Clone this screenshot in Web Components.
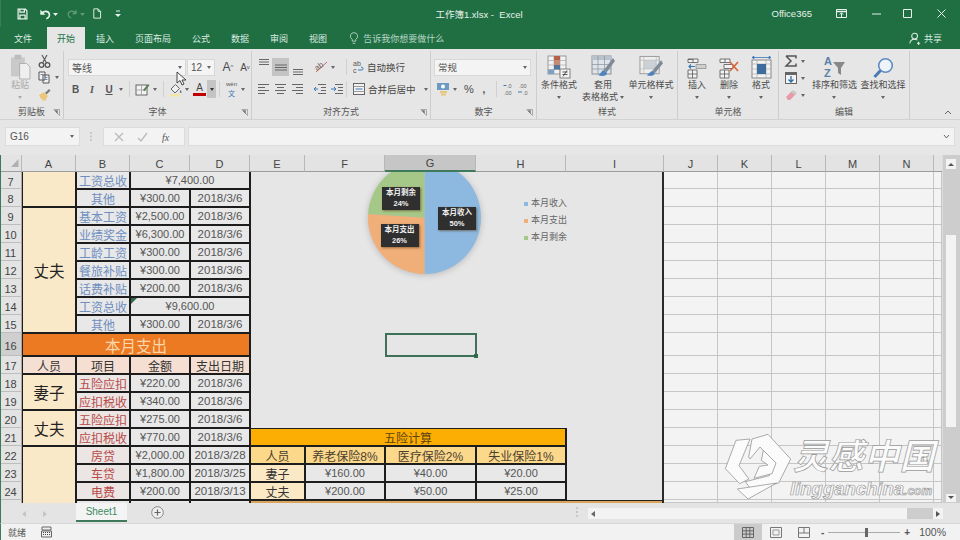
<!DOCTYPE html>
<html lang="zh">
<head>
<meta charset="utf-8">
<title>工作簿1.xlsx - Excel</title>
<style>
  html, body { margin: 0; height: 100%; }
  body {
    width: 960px; height: 540px; overflow: hidden;
    display: flex; flex-direction: column;
    font-family: "Liberation Sans", "Noto Sans CJK SC", sans-serif;
    background: #e6e6e6;
  }
</style>
</head>
<body>
<x-titlebar></x-titlebar>
<x-tabs></x-tabs>
<x-ribbon></x-ribbon>
<x-formula></x-formula>
<x-sheet></x-sheet>
<x-sheetbar></x-sheetbar>
<x-status></x-status>

<script>
  const ICONS = {
    save: '<path d="M1.5 1.5h10l2 2v11h-12z M4 1.5v4h6v-4 M4 14.5v-5h7v5" fill="none" stroke="currentColor" stroke-width="1.7"/>',
    undo: '<path d="M3 6.5c2-3.5 8-3.5 9 .5 .6 2.5-1 4.5-3.5 5.5" fill="none" stroke="currentColor" stroke-width="1.9"/><path d="M1.5 2v6h6z" fill="currentColor"/>',
    redo: '<path d="M12 6.5c-2-3.5-8-3.5-9 .5-.6 2.5 1 4.5 3.5 5.5" fill="none" stroke="currentColor" stroke-width="1.6"/><path d="M13.5 2v6h-6z" fill="currentColor"/>',
    doc: '<path d="M2.5 1h6l3.5 3.5v9.500h-9.500z M8.500 1v3.500h3.500" fill="none" stroke="currentColor" stroke-width="1.3"/>',
    caret: '<path d="M0 0h5L2.500 3z" fill="currentColor"/>',
    qat: '<path d="M1 1h4" stroke="currentColor"/><path d="M0 4h6L3 7z" fill="currentColor"/>',
    bulb: '<path d="M5.500 1a4 4 0 0 1 2 7.500v2h-4v-2a4 4 0 0 1 2-7.500z M4 13h3" fill="none" stroke="currentColor"/>',
    user: '<circle cx="7" cy="5" r="3.600" fill="none" stroke="currentColor" stroke-width="1.300"/><path d="M1 14c.5-3 2.500-5 6-5 1.500 0 2.500.4 3.500 1 M10 14h4 M12 12v4" fill="none" stroke="currentColor" stroke-width="1.300"/>',
    ribbonopt: '<path d="M.5 1.500h10v8h-10z" fill="none" stroke="currentColor"/><path d="M1 3.500h9" stroke="currentColor" stroke-width="1.500"/><path d="M5.500 9V5 M3.800 6.500l1.700-1.700 1.700 1.700" fill="none" stroke="currentColor"/>',
    paste: '<rect x="1" y="4" width="16" height="22" fill="#c9c9c9"/><rect x="5" y="1" width="8" height="5" rx="1" fill="#bdbdbd"/><path d="M11 11h8l4 4v14h-12z" fill="#efefef" stroke="#a8a8a8"/>',
    cut: '<circle cx="3.500" cy="11" r="2.300" fill="none" stroke="#555" stroke-width="1.300"/><circle cx="9.500" cy="11" r="2.300" fill="none" stroke="#555" stroke-width="1.300"/><path d="M4.500 9 9 1 M8.500 9 4 1" stroke="#555" stroke-width="1.100"/>',
    copy: '<path d="M1 1h6v8h-6z M5 4h6v8h-6z" fill="#f3f3f3" stroke="#555"/><path d="M2.500 3.500h3 M6.500 6.500h3 M6.500 8.500h3" stroke="#6d8ab0"/>',
    brush: '<path d="M7 5l4-4 1.500 1.500-4 4z" fill="#777"/><path d="M1 7l5-3 4 4-3 5c-2 0-5-3-6-6z" fill="#eac77c"/>',
    border: '<rect x="1" y="3" width="11" height="10" fill="#f3f3f3" stroke="#666"/><path d="M1 8h11 M6.500 3v10" stroke="#aaa"/><path d="M8 8l5-6 1.500 1.200-5 6z" fill="#5d7d5b"/>',
    fill: '<path d="M3 7l4.500-4.500 4 4-4.500 4.500z" fill="#f0f0f0" stroke="#666"/><path d="M12.500 8c1 1.500 1.500 2.500.5 3s-1.500-1.500-.5-3z" fill="#666"/><rect x="1" y="12" width="11" height="2.500" fill="#f2e6a6"/>',
    wen: '<text x="7.500" y="5" font-size="6" text-anchor="middle" fill="#555" font-family="Liberation Sans">wén</text><text x="7.500" y="15" font-size="7" text-anchor="middle" fill="#3a76b5" font-family="Noto Sans CJK SC">文</text>',
    atop: '<path d="M1 1.500h10 M1 4h10 M1 6.500h10" stroke="#666"/>',
    amid: '<path d="M2 5h12 M2 7.500h12 M2 10h12" stroke="#666"/>',
    abot: '<path d="M1 5.500h10 M1 8h10 M1 10.500h10" stroke="#666"/>',
    left: '<path d="M1 1.500h11 M1 4.500h7 M1 7.500h11 M1 10.500h7" stroke="#666"/>',
    center: '<path d="M1 1.500h11 M3 4.500h7 M1 7.500h11 M3 10.500h7" stroke="#666"/>',
    right: '<path d="M1 1.500h11 M5 4.500h7 M1 7.500h11 M5 10.500h7" stroke="#666"/>',
    indl: '<path d="M5 1.500h8 M8 4.500h5 M8 7.500h5 M5 10.500h8" stroke="#666"/><path d="M5 6H1 M3 4 1 6l2 2" fill="none" stroke="#3b78b5"/>',
    indr: '<path d="M5 1.500h8 M8 4.500h5 M8 7.500h5 M5 10.500h8" stroke="#666"/><path d="M1 6h5 M4 4l2 2-2 2" fill="none" stroke="#3b78b5"/>',
    orient: '<text x="1" y="9" font-size="8" fill="#666" font-family="Liberation Sans" transform="rotate(-35 5 7)">ab</text><path d="M2 12 13 2" stroke="#c04a3a" stroke-width=".8"/>',
    wrap: '<text x="0" y="6" font-size="7" fill="#555" font-family="Liberation Sans">ab</text><text x="0" y="13" font-size="7" fill="#555" font-family="Liberation Sans">c</text><path d="M5 10h4c1.500 0 1.500-3-1-3" fill="none" stroke="#3b78b5"/>',
    merge: '<rect x=".5" y=".5" width="11" height="11" fill="#f3f3f3" stroke="#666"/><path d="M.5 3.500h11 M.5 8.500h11" stroke="#999"/><path d="M2.500 6h7" stroke="#3b78b5"/>',
    currency: '<rect x="1" y="1" width="12" height="7" fill="#6d9ac4"/><circle cx="7" cy="4.500" r="2" fill="#fff"/><path d="M4 9h7v2h-7z M5 11.500h5v2h-5z" fill="#e6c77a"/>',
    inc: '<text x="4" y="6" font-size="5.500" fill="#666" font-family="Liberation Sans">.0</text><text x="1" y="12.500" font-size="5.500" fill="#666" font-family="Liberation Sans">.00</text><path d="M.5 3.500h3" stroke="#3b78b5"/>',
    dec: '<text x="2" y="6" font-size="5.500" fill="#666" font-family="Liberation Sans">.00</text><text x="6" y="12.500" font-size="5.500" fill="#666" font-family="Liberation Sans">.0</text><path d="M1 10h4" stroke="#3b78b5"/>',
    cond: '<rect x="1" y="1" width="18" height="18" fill="#f2f2f2" stroke="#999"/><path d="M1 5.500h18 M1 10h18 M1 14.500h18 M7 1v18 M13 1v18" stroke="#aaa" stroke-width=".7"/><rect x="7" y="1" width="6" height="4.500" fill="#b6604a"/><rect x="7" y="5.500" width="6" height="4.500" fill="#c78a74"/><rect x="7" y="10" width="6" height="4.500" fill="#52759c"/><rect x="1" y="14.500" width="6" height="4.500" fill="#7fa0c4"/><rect x="13" y="14" width="10" height="9" fill="#f4f4f4" stroke="#666" stroke-width=".8"/><path d="M15.500 17h5 M15.500 19.500h5 M20 15.500l-4 6" stroke="#333" stroke-width=".8"/>',
    table: '<rect x="1" y="1" width="19" height="18" fill="#dfe4ea" stroke="#8a9099"/><rect x="1" y="1" width="19" height="4" fill="#b9c2cc"/><path d="M1 9.500h19 M1 14h19 M7 1v18 M13.500 1v18" stroke="#8a9099" stroke-width=".7"/><path d="M22 3 13 15l2.500 2.500L24 6z" fill="#7f8a96"/><path d="M13 15c-3 1-3 4-6 5 4 2 9 1 9-2z" fill="#4f83bd"/>',
    cellstyle: '<rect x="1" y="1" width="20" height="18" fill="#eee" stroke="#9a9a9a"/><rect x="5" y="5" width="13" height="9" fill="#cbd1d6"/><path d="M1 5h20 M1 14h20 M5 1v18 M18 1v18" stroke="#b3b3b3" stroke-width=".6"/><path d="M23 5 14 16l2.500 2.500L25 8z" fill="#7f8a96"/><path d="M14 16c-3 1-3 3-6 4.500 4 1.500 8 .500 8.500-2z" fill="#4f83bd"/>',
    ins: '<path d="M1 1h10v3.500H1z M1 1.500h5M6 1v3.500 M1 12h9v8H1z M1 16h9 M5.500 12v8" fill="#f3f3f3" stroke="#666" stroke-width=".9"/><path d="M9 6.500h10v4H9z" fill="#cfcfcf" stroke="#888" stroke-width=".7"/><path d="M8 8.500H2 M4 6.500l-2 2 2 2" fill="none" stroke="#3b78b5" stroke-width="1.200"/>',
    del: '<path d="M1 1h10v3.500H1z M6 1v3.500 M1 12h9v8H1z M1 16h9 M5.500 12v8 M5 6.500h9v4H5z" fill="#f3f3f3" stroke="#666" stroke-width=".9"/><path d="M11 4l8 9 M19 4l-8 9" stroke="#d9663f" stroke-width="1.700"/>',
    fmt: '<rect x="1" y="4" width="19" height="18" fill="#f3f3f3" stroke="#888"/><path d="M1 8h19 M1 13h19 M1 18h19 M6 4v18 M15 4v18" stroke="#aaa" stroke-width=".7"/><rect x="6" y="8" width="9" height="10" fill="#3d6d9e"/><path d="M1 1.500h19 M1 1.500l2-1.200v2.400z M20 1.500l-2-1.200v2.400z" stroke="#3b78b5" stroke-width=".8" fill="#3b78b5"/>',
    sigma: '<path d="M1 1h10v2.500 M1 1l5 5-5 5h10v-2.500" fill="none" stroke="#555" stroke-width="1.500"/>',
    down: '<rect x=".5" y=".5" width="11" height="11" fill="#f3f3f3" stroke="#666"/><rect x=".5" y=".5" width="11" height="2.500" fill="#666"/><path d="M6 4v6 M3.500 7.500 6 10l2.500-2.500" fill="none" stroke="#2e6ca8" stroke-width="1.300"/>',
    erase: '<path d="M1 8l6-6 4 3-6 6H3z" fill="#e79aa8"/><path d="M6 3l2-2 4 3-2 2z" fill="#c9c9c9"/>',
    sort: '<text x="0" y="10" font-size="11" font-weight="bold" fill="#5d7fa8" font-family="Liberation Sans">A</text><text x="0" y="22" font-size="11" font-weight="bold" fill="#5d7fa8" font-family="Liberation Sans">Z</text><path d="M9 7h12l-4 6v7l-3-2v-5z" fill="#888"/>',
    find: '<circle cx="13.500" cy="8.500" r="6.800" fill="#eef4fa" stroke="#5d8cc0" stroke-width="1.600"/><path d="M8.500 13.500 2.500 20" stroke="#4b7bb0" stroke-width="3"/>',
    launcher: '<path d="M.5 .5h6v6" fill="none" stroke="#999" stroke-width=".8"/><path d="M1.500 1.500h3v3z M6.500 6.500L3 3" fill="#777" stroke="#777" stroke-width=".5"/>',
    fx: '<text x="1" y="10" font-size="10" font-style="italic" font-family="Liberation Serif" fill="#555">fx</text>',
    cross: '<path d="M1 1l8 8 M9 1 1 9" stroke="#bbb" stroke-width="1.300"/>',
    check: '<path d="M1 6l3 3 6-8" fill="none" stroke="#bbb" stroke-width="1.300"/>',
    grid: '<path d="M.5 .5h11v10H.5z M.5 3.800h11 M.5 7.100h11 M4.200 .5v10 M7.800 .5v10" fill="none" stroke="#666"/>',
    page: '<path d="M.5 .5h11v10H.5z" fill="none" stroke="#777"/><path d="M3 3h6v5H3z" fill="none" stroke="#999"/>',
    brk: '<path d="M.5 .5h11v10H.5z M.5 6h11 M6 .5V6" fill="none" stroke="#777"/>',
    macro: '<path d="M1 1h9v3H1z M.5 5h10v6H.5z" fill="none" stroke="#666"/><path d="M2 6.500h1 M4 6.500h1 M6 6.500h1 M8 6.500h1 M2 8.500h1 M4 8.500h1 M6 8.500h1 M8 8.500h1" stroke="#444"/>'
  };

  class XIco extends HTMLElement {
    connectedCallback() {
      const w = this.getAttribute('w') || 14;
      const h = this.getAttribute('h') || w;
      const vb = this.getAttribute('vb') || `0 0 ${w} ${h}`;
      this.attachShadow({ mode: 'open' }).innerHTML = `
        <style>:host { display: inline-flex; flex: none; } svg { display: block; overflow: visible; }</style>
        <svg width="${w}" height="${h}" viewBox="${vb}">${ICONS[this.getAttribute('n')] || ''}</svg>`;
    }
  }
  customElements.define('x-ico', XIco);

  class XTitlebar extends HTMLElement {
    constructor() {
      super();
      this.attachShadow({ mode: 'open' }).innerHTML = `
        <style>
          :host { display: grid; grid-template-columns: 1fr auto 1fr; align-items: center; height: 27px; background: #1f6f43; color: #e8f1eb; font-size: 9.500px; flex: none; border-left: 1px solid #3b7a5b; box-sizing: border-box; }
          .l { display: flex; align-items: center; padding-left: 16px; }
          .r { display: flex; align-items: center; justify-content: flex-end; }
          .t { margin-right: 3px; }
          .o { margin-right: 24px; }
          .dim { color: #5f9a7b; }
        </style>
        <div class="l">
          <x-ico n="save" w="11" h="12" vb="0 0 15 16" style="margin-right:11px"></x-ico>
          <x-ico n="undo" w="12" vb="0 0 14 14"></x-ico>
          <x-ico n="caret" w="5" h="3" style="margin:2px 0 0 2px"></x-ico>
          <x-ico n="redo" w="11" vb="0 0 14 14" class="dim" style="margin-left:8px"></x-ico>
          <x-ico n="caret" w="5" h="3" class="dim" style="margin:2px 0 0 3px"></x-ico>
          <x-ico n="doc" w="10" h="11" vb="0 0 14 15" style="margin-left:7px"></x-ico>
          <x-ico n="qat" w="6" h="7" style="margin-left:13px"></x-ico>
        </div>
        <div class="t">工作簿1.xlsx&nbsp;- &nbsp;Excel</div>
        <div class="r">
          <span class="o">Office365</span>
          <x-ico n="ribbonopt" w="11" h="11"></x-ico>
          <svg width="9" height="2" style="margin-left:25px"><path d="M0 1h9" stroke="#e8f1eb"/></svg>
          <svg width="9" height="9" style="margin-left:22px"><path d="M.5 .5h8v8h-8z" fill="none" stroke="#e8f1eb"/></svg>
          <svg width="9" height="9" style="margin:0 14px 0 25px"><path d="M.5 .5l8 8 M8.500 .5l-8 8" stroke="#e8f1eb"/></svg>
        </div>`;
    }
  }
  customElements.define('x-titlebar', XTitlebar);

  class XTabs extends HTMLElement {
    constructor() {
      super();
      const tabs = ['插入', '页面布局', '公式', '数据', '审阅', '视图'];
      this.attachShadow({ mode: 'open' }).innerHTML = `
        <style>
          :host { display: flex; align-items: stretch; gap: 1px; height: 22px; background: #1f6f43; color: #dcebe2; font-size: 9px; padding-left: 4px; box-sizing: border-box; flex: none; }
          span { display: flex; align-items: center; padding: 0 10px; white-space: nowrap; }
          .on { background: #e6e6e6; color: #217346; margin: 0 0 0 4px; }
          .tell { padding: 0; margin-left: 12px; gap: 5px; color: #b9d6c6; }
          .share { margin-left: auto; padding: 0 18px 0 0; gap: 3px; }
        </style>
        <span>文件</span><span class="on">开始</span>
        ${tabs.map(t => `<span>${t}</span>`).join('')}
        <span class="tell"><x-ico n="bulb" w="8" h="14" vb="1 0 9 14"></x-ico>告诉我你想要做什么</span>
        <span class="share"><x-ico n="user" w="12" h="13" vb="0 0 15 16"></x-ico>共享</span>`;
    }
  }
  customElements.define('x-tabs', XTabs);

  class XGroup extends HTMLElement {
    constructor() {
      super();
      const launcher = this.hasAttribute('launcher') ? '<x-ico class="lnc" n="launcher" w="7"></x-ico>' : '';
      this.attachShadow({ mode: 'open' }).innerHTML = `
        <style>
          :host { display: flex; flex-direction: column; flex: none; box-sizing: border-box; border-right: 1px solid #cdcdcd; height: 68px; margin-top: 2px; width: ${this.getAttribute('w')}px; position: relative; }
          .c { flex: 1; display: flex; min-height: 0; }
          .lb { height: 14px; line-height: 14px; text-align: center; font-size: 9px; color: #555; flex: none; }
          .lnc { position: absolute; right: 3px; bottom: 3px; }
        </style>
        <div class="c"><slot></slot></div>
        <div class="lb">${this.getAttribute('label')}</div>${launcher}`;
    }
  }
  customElements.define('x-group', XGroup);

  class XBig extends HTMLElement {
    constructor() {
      super();
      this.attachShadow({ mode: 'open' }).innerHTML = `
        <style>
          :host { display: flex; flex-direction: column; align-items: center; flex: none; font-size: 9px; line-height: 12px; color: #4a4a4a; white-space: nowrap; text-align: center; }
          .i { height: 28px; flex: none; display: flex; align-items: flex-end; }
        </style>
        <div class="i"><slot name="i"></slot></div>
        <div><slot></slot></div>`;
    }
  }
  customElements.define('x-big', XBig);

  class XRibbon extends HTMLElement {
    constructor() {
      super();
      this.attachShadow({ mode: 'open' }).innerHTML = `
        <style>
          :host { display: flex; height: 71px; background: #e6e6e6; border-bottom: 1px solid #d2d2d2; box-sizing: border-box; position: relative; flex: none; color: #4a4a4a; font-size: 9px; }
          .c { display: inline-block; width: 0; height: 0; border: 2px solid transparent; border-top: 3px solid #666; border-bottom: 0; flex: none; vertical-align: middle; }
          .col { display: flex; flex-direction: column; }
          .rows { display: flex; flex-direction: column; padding-top: 7px; gap: 4px; }
          .row { display: flex; align-items: center; height: 18px; }
          .b { display: flex; align-items: center; justify-content: center; height: 18px; flex: none; }
          .sep { width: 1px; height: 16px; background: #d0d0d0; flex: none; }
          .box { background: #f4f4f4; border: 1px solid #d8d8d8; box-sizing: border-box; height: 17px; display: flex; align-items: center; justify-content: space-between; padding: 0 3px; color: #555; font-size: 10px; flex: none; }
          .sl { font-size: 9.500px; gap: 3px; display: flex; align-items: center; white-space: nowrap; color: #444; }
          .hl { background: #c4c4c4; }
          .cur { position: absolute; left: 176px; top: 22px; }
          .txt { font-family: "Liberation Sans", sans-serif; font-weight: bold; color: #555; font-size: 10px; }
          .up { position: absolute; right: 8px; bottom: 4px; }
        </style>
        <x-group w="64" label="剪贴板" launcher>
          <x-big style="width:36px;margin-left:2px;color:#aaa"><x-ico slot="i" n="paste" w="21" h="25" vb="0 0 24 29"></x-ico>粘贴<br><i class="c" style="border-top-color:#aaa"></i></x-big>
          <div class="col" style="padding-top:1px">
            <div class="b" style="justify-content:flex-start;height:17px"><x-ico n="cut" w="13" h="13"></x-ico></div>
            <div class="b" style="justify-content:flex-start;gap:5px;height:17px"><x-ico n="copy" w="12" h="13"></x-ico><i class="c"></i></div>
            <div class="b" style="justify-content:flex-start;height:17px"><x-ico n="brush" w="13"></x-ico></div>
          </div>
        </x-group>
        <x-group w="188" label="字体" launcher>
          <div class="rows" style="padding-left:4px">
            <div class="row" style="gap:1px">
              <div class="box" style="width:118px"><span>等线</span><i class="c"></i></div>
              <div class="box" style="width:28px"><span>12</span><i class="c"></i></div>
              <span class="b" style="width:18px;margin-left:3px;font-size:12px;font-family:'Liberation Sans'">A<sup style="font-size:6px">^</sup></span>
              <span class="b" style="width:14px;font-size:10px;font-family:'Liberation Sans'">A<sup style="font-size:6px">v</sup></span>
            </div>
            <div class="row">
              <span class="b txt" style="width:15px">B</span>
              <span class="b txt" style="width:18px;font-style:italic;font-family:'Liberation Serif'">I</span>
              <span class="b txt" style="width:16px;text-decoration:underline">U</span>
              <span class="b" style="width:7px"><i class="c"></i></span>
              <span style="width:5px"></span><i class="sep"></i><span style="width:5px"></span>
              <x-ico n="border" w="15"></x-ico><span class="b" style="width:9px"><i class="c"></i></span>
              <span style="width:4px"></span><i class="sep"></i><span style="width:4px"></span>
              <x-ico n="fill" w="15"></x-ico><span class="b" style="width:7px"><i class="c"></i></span>
              <span class="b" style="width:15px;flex-direction:column;color:#444;font:10px 'Liberation Sans';margin-left:2px;line-height:11px"><span>A</span><span style="width:13px;height:3px;background:#c00000"></span></span>
              <span class="b hl" style="width:9px"><i class="c" style="border-top-color:#333"></i></span>
              <span style="width:3px"></span><i class="sep"></i><span style="width:4px"></span>
              <x-ico n="wen" w="15" h="16"></x-ico><span class="b" style="width:7px"><i class="c"></i></span>
            </div>
          </div>
        </x-group>
        <x-group w="179" label="对齐方式" launcher>
          <div class="rows" style="padding-left:3px">
            <div class="row">
              <span class="b" style="width:17px"><x-ico n="atop" w="12" h="12" style="margin-top:-6px"></x-ico></span>
              <span class="b hl" style="width:17px"><x-ico n="amid" w="16" h="15"></x-ico></span>
              <span class="b" style="width:17px"><x-ico n="abot" w="12" h="12" style="margin-top:6px"></x-ico></span>
              <span style="width:8px"></span>
              <x-ico n="orient" w="15"></x-ico><span class="b" style="width:8px"><i class="c"></i></span>
              <span style="width:9px"></span><i class="sep"></i><span style="width:6px"></span>
              <span class="sl"><x-ico n="wrap" w="11" h="14"></x-ico>自动换行</span>
            </div>
            <div class="row">
              <span class="b" style="width:17px"><x-ico n="left" w="13" h="12"></x-ico></span>
              <span class="b" style="width:17px"><x-ico n="center" w="13" h="12"></x-ico></span>
              <span class="b" style="width:17px"><x-ico n="right" w="13" h="12"></x-ico></span>
              <span style="width:7px"></span>
              <x-ico n="indl" w="14" h="12"></x-ico><span style="width:3px"></span><x-ico n="indr" w="14" h="12"></x-ico>
              <span style="width:2px"></span><i class="sep"></i><span style="width:6px"></span>
              <span class="sl"><x-ico n="merge" w="12"></x-ico>合并后居中<i class="c" style="margin-left:5px"></i></span>
            </div>
          </div>
        </x-group>
        <x-group w="106" label="数字" launcher>
          <div class="rows" style="padding-left:3px">
            <div class="row"><div class="box" style="width:97px"><span style="font-size:9.500px">常规</span><i class="c"></i></div></div>
            <div class="row">
              <span style="width:2px"></span>
              <x-ico n="currency" w="14"></x-ico><span class="b" style="width:9px"><i class="c"></i></span>
              <span class="b" style="width:20px;font:11px 'Liberation Sans'">%</span>
              <span class="b" style="width:10px;font:bold 10px 'Liberation Sans'">,</span>
              <span style="width:7px"></span><i class="sep"></i><span style="width:6px"></span>
              <x-ico n="inc" w="14"></x-ico>
              <x-ico n="dec" w="14"></x-ico>
            </div>
          </div>
        </x-group>
        <x-group w="141" label="样式">
          <x-big style="width:40px;margin-left:2px"><x-ico slot="i" n="cond" w="24"></x-ico>条件格式<br><i class="c"></i></x-big>
          <x-big style="width:46px;margin-left:1px"><x-ico slot="i" n="table" w="24"></x-ico>套用<br>表格格式<i class="c" style="margin-left:2px"></i></x-big>
          <x-big style="width:46px;margin-left:2px"><x-ico slot="i" n="cellstyle" w="24" vb="0 0 25 24"></x-ico>单元格样式<br><i class="c"></i></x-big>
        </x-group>
        <x-group w="101" label="单元格">
          <x-big style="width:32px;margin-left:3px"><x-ico slot="i" n="ins" w="21"></x-ico>插入<br><i class="c"></i></x-big>
          <x-big style="width:32px"><x-ico slot="i" n="del" w="21"></x-ico>删除<br><i class="c"></i></x-big>
          <x-big style="width:32px"><x-ico slot="i" n="fmt" w="21" h="23"></x-ico>格式<br><i class="c"></i></x-big>
        </x-group>
        <x-group w="131" label="编辑">
          <div class="col" style="width:31px;padding:4px 0 0 6px;gap:5px;box-sizing:border-box">
            <span class="b" style="justify-content:flex-start;gap:4px;height:12px"><x-ico n="sigma" w="12"></x-ico><i class="c"></i></span>
            <span class="b" style="justify-content:flex-start;gap:4px;height:12px"><x-ico n="down" w="12"></x-ico><i class="c"></i></span>
            <span class="b" style="justify-content:flex-start;gap:4px;height:12px"><x-ico n="erase" w="12"></x-ico><i class="c"></i></span>
          </div>
          <x-big style="width:49px"><x-ico slot="i" n="sort" w="22" h="24"></x-ico>排序和筛选<br><i class="c"></i></x-big>
          <x-big style="width:48px"><x-ico slot="i" n="find" w="22"></x-ico>查找和选择<br><i class="c"></i></x-big>
        </x-group>
        <svg class="up" width="8" height="5"><path d="M1 4l3-3 3 3" fill="none" stroke="#666"/></svg>
        <svg class="cur" width="12" height="15" viewBox="0 0 12 15"><path d="M1 1v11l3-2.500 2 4.500 2-1-2-4h4z" fill="#f6f6f6" stroke="#333" stroke-width=".9"/></svg>`;
    }
  }
  customElements.define('x-ribbon', XRibbon);

  class XFormula extends HTMLElement {
    constructor() {
      super();
      this.attachShadow({ mode: 'open' }).innerHTML = `
        <style>
          :host { display: flex; align-items: center; height: 35px; background: #e6e6e6; padding: 0 5px; box-sizing: border-box; flex: none; position: relative; }
          .box { height: 19px; background: #f3f3f3; border: 1px solid #dcdcdc; box-sizing: border-box; display: flex; align-items: center; flex: none; margin-top: -2px; }
          .name { width: 75px; justify-content: space-between; padding: 0 5px 0 4px; font-size: 10px; color: #555; }
          .fn { width: 82px; margin-left: 23px; gap: 13px; padding-left: 10px; }
          .in { flex: 1; margin-left: 3px; justify-content: flex-end; padding-right: 4px; }
          .dots { position: absolute; left: 90px; top: 12px; }
          .c { width: 0; height: 0; border: 2px solid transparent; border-top: 3px solid #666; border-bottom: 0; }
        </style>
        <div class="box name"><span>G16</span><i class="c"></i></div>
        <div class="box fn"><x-ico n="cross" w="10"></x-ico><x-ico n="check" w="11" h="10"></x-ico><x-ico n="fx" w="11" h="12"></x-ico></div>
        <div class="box in"><svg width="7" height="5"><path d="M1 1l2.500 3L6 1" fill="none" stroke="#666"/></svg></div>
        <svg class="dots" width="2" height="9"><path d="M1 0v2 M1 3.500v2 M1 7v2" stroke="#aaa"/></svg>`;
    }
  }
  customElements.define('x-formula', XFormula);

  class XChart extends HTMLElement {
    constructor() {
      super();
      const tag = (x, y, a, b) => `<div class="tag" style="left:${x}px;top:${y}px">${a}<br>${b}</div>`;
      const leg = (c, t) => `<div class="lg"><i style="background:${c}"></i>${t}</div>`;
      this.attachShadow({ mode: 'open' }).innerHTML = `
        <style>
          :host { display: block; position: absolute; left: 249px; top: 17px; width: 414px; height: 328px; overflow: hidden; }
          svg { position: absolute; left: 0; top: 0; filter: drop-shadow(0 1px 3px rgba(0,0,0,.2)); }
          .tag { position: absolute; width: 38px; height: 23px; background: #2f2f2f; color: #f0f0f0; font-size: 7.500px; line-height: 10.500px; text-align: center; padding-top: 1px; box-sizing: border-box; font-weight: bold; box-shadow: 1px 1px 2px rgba(90,60,20,.6); white-space: nowrap; }
          .legend { position: absolute; left: 274px; top: 25px; display: flex; flex-direction: column; gap: 4px; font-size: 9px; line-height: 13px; color: #666; }
          .lg { display: flex; align-items: center; gap: 3px; }
          .lg i { width: 4px; height: 4px; }
        </style>
        <svg width="414" height="120">
          <path d="M174.500 45.500V-11A56.500 56.500 0 0 1 174.500 102z" fill="#8db8e0"/>
          <path d="M174.500 45.500V102A56.500 56.500 0 0 1 118.100 41.950z" fill="#f0ae78"/>
          <path d="M174.500 45.500L118.100 41.950A56.500 56.500 0 0 1 174.500 -11z" fill="#a5c788"/>
        </svg>
        ${tag(188, 35, '本月收入', '50%')}${tag(130.500, 52, '本月支出', '26%')}${tag(132, 15, '本月剩余', '24%')}
        <div class="legend">${leg('#8db8e0', '本月收入')}${leg('#f0ae78', '本月支出')}${leg('#a5c788', '本月剩余')}</div>`;
    }
  }
  customElements.define('x-chart', XChart);

  class XWatermark extends HTMLElement {
    constructor() {
      super();
      this.attachShadow({ mode: 'open' }).innerHTML = `
        <style>
          :host { display: block; position: absolute; left: 722px; top: 278px; width: 220px; height: 70px; pointer-events: none; }
          svg { position: absolute; left: 0; top: 0; }
          div { position: absolute; white-space: nowrap; color: #fbfbfb; -webkit-text-stroke: .7px #9a9a9a; font-style: italic; font-weight: bold; }
          .cn { left: 70px; top: 3px; font-size: 35px; line-height: 42px; letter-spacing: .5px; }
          .en { left: 67px; top: 45px; font-size: 18.500px; line-height: 22px; }
          .en span { font-size: 12px; }
        </style>
        <svg width="70" height="70" viewBox="185 40 210 210">
          <g fill="#fbfbfb" stroke="#9a9a9a" stroke-width="2.500" stroke-linejoin="round">
            <path d="M224 62l42-4-33 80 30 40-28 14-43-45z"/>
            <path d="M272 58l48-14 68 74-36 72-82 20-18-24 72-18 14-42-42-44-30 36-4-6z"/>
            <path d="M306 92l38 38-12 32-54 14 16-36 26-4-20-14z"/>
            <path d="M228 208l118-18-86 48z"/>
          </g>
        </svg>
        <div class="cn">灵感中国</div>
        <div class="en">lingganchina<span>.com</span></div>`;
    }
  }
  customElements.define('x-watermark', XWatermark);

  class XSheet extends HTMLElement {
    constructor() {
      super();
      const cols = [22, 54, 54, 60, 60, 55, 80, 91, 90, 98, 54, 54, 54, 54, 54, 8];
      const rowsH = [17, 17, ...Array(8).fill(18), 23, ...Array(8).fill(18), 3];
      const letters = ['A', 'B', 'C', 'D', 'E', 'F', 'G', 'H', 'I', 'J', 'K', 'L', 'M', 'N'];
      let html = '';
      // n is the sheet row number, c the grid column (A = 2)
      const cell = (c, n, cs, rs, cls, text = '') => {
        const top = n === 7 ? ' nt' : '';
        const end = n + rs - 1 === 25 ? ' nb' : '';
        html += `<div class="${cls}${top}${end}" style="grid-column:${c}/span ${cs};grid-row:${n - 5}/span ${rs}">${text}</div>`;
      };

      html += `<div class="hd corner" style="grid-column:1;grid-row:1"><svg width="8" height="8"><path d="M7.500 0v8H0z" fill="#b0b0b0"/></svg></div>`;
      letters.forEach((l, i) => {
        html += `<div class="hd${l === 'G' ? ' sel' : ''}" style="grid-column:${i + 2};grid-row:1">${l}</div>`;
      });
      html += `<div class="hd" style="grid-column:16;grid-row:1;border-right:0"></div>`;
      for (let n = 7; n <= 25; n++) {
        cell(1, n, 1, 1, 'rh' + (n === 16 ? ' rsel' : ''), n === 25 ? '' : n);
      }

      // free area to the right of the sheet's used range
      for (let n = 7; n <= 25; n++) {
        for (let c = 11; c <= 16; c++) cell(c, n, 1, 1, 'free');
      }

      const money = (n, b, cls, c, d) => {
        cell(3, n, 1, 1, 't ' + cls, b);
        cell(4, n, 1, 1, 't num', c);
        cell(5, n, 1, 1, 't num date', d);
      };
      const total = (n, v, mark) => {
        cell(3, n, 1, 1, 't blue', '工资总收');
        cell(4, n, 2, 1, 't num' + (mark ? ' err' : ''), v);
      };

      cell(2, 7, 1, 2, 't yel');
      total(7, '¥7,400.00');
      money(8, '其他', 'blue', '¥300.00', '2018/3/6');
      cell(2, 9, 1, 7, 't yel big', '丈夫');
      [['基本工资', '¥2,500.00'], ['业绩奖金', '¥6,300.00'], ['工龄工资', '¥300.00'], ['餐旅补贴', '¥300.00'], ['话费补贴', '¥200.00']]
        .forEach((r, i) => money(9 + i, r[0], 'blue', r[1], '2018/3/6'));
      total(14, '¥9,600.00', true);
      money(15, '其他', 'blue', '¥300.00', '2018/3/6');

      cell(2, 16, 4, 1, 't title', '本月支出');
      ['人员', '项目', '金额', '支出日期'].forEach((t, i) => cell(2 + i, 17, 1, 1, 't pink', t));
      cell(2, 18, 1, 2, 't yel big', '妻子');
      cell(2, 20, 1, 2, 't yel big', '丈夫');
      money(18, '五险应扣', 'red', '¥220.00', '2018/3/6');
      money(19, '应扣税收', 'red', '¥340.00', '2018/3/6');
      money(20, '五险应扣', 'red', '¥275.00', '2018/3/6');
      money(21, '应扣税收', 'red', '¥770.00', '2018/3/6');
      cell(2, 22, 1, 4, 't yel');
      money(22, '房贷', 'red', '¥2,000.00', '2018/3/28');
      money(23, '车贷', 'red', '¥1,800.00', '2018/3/25');
      money(24, '电费', 'red', '¥200.00', '2018/3/13');
      cell(3, 25, 1, 1, 't num'); cell(4, 25, 1, 1, 't num'); cell(5, 25, 1, 1, 't num');

      cell(6, 7, 5, 14, 'blank');
      cell(10, 21, 1, 4, 'blank');
      cell(6, 21, 4, 1, 't amber', '五险计算');
      ['人员', '养老保险8%', '医疗保险2%', '失业保险1%'].forEach((t, i) => cell(6 + i, 22, 1, 1, 't gold', t));
      cell(6, 23, 1, 1, 't cream', '妻子');
      cell(6, 24, 1, 1, 't cream', '丈夫');
      [['¥160.00', '¥40.00', '¥20.00'], ['¥200.00', '¥50.00', '¥25.00']].forEach((r, i) => {
        r.forEach((v, j) => cell(7 + j, 23 + i, 1, 1, 't num', v));
      });
      cell(6, 25, 5, 1, 'edge');

      this.attachShadow({ mode: 'open' }).innerHTML = `
        <style>
          :host { display: flex; height: 348px; flex: none; position: relative; overflow: hidden; background: #e6e6e6; border-left: 1px solid #3b7a5b; box-sizing: border-box; }
          .g { display: grid; margin-left: -1px; grid-template-columns: ${cols.map(c => c + 'px').join(' ')}; grid-template-rows: ${rowsH.map(r => r + 'px').join(' ')}; font-size: 11px; color: #4d4d4d; overflow: hidden; flex: none; }
          .g > div { box-sizing: border-box; display: flex; align-items: center; justify-content: center; white-space: nowrap; min-width: 0; overflow: hidden; }
          .hd { background: #e3e3e3; border-right: 1px solid #b8b8b8; border-bottom: 1px solid #9c9c9c; font-size: 11px; color: #444; padding-top: 1px; }
          .corner { justify-content: flex-end !important; padding: 0 2px 0 0; }
          .sel { background: #c6c6c6; border-bottom: 2px solid #3f7a5c; }
          .rh { background: #e3e3e3; border-bottom: 1px solid #bdbdbd; border-right: 1px solid #a8a8a8; font-size: 11px; color: #444; padding-top: 3px; }
          .rsel { background: #cfcfcf; }
          .free { background: #f3f3f3; border-right: 1px solid #c6c6c6; border-bottom: 1px solid #c6c6c6; }
          /* adjoining cells each draw 1px, so the 2px rule straddles the gridline */
          .t { border: 1px solid #1d1d1d; background: #e8e8e8; }
          .nt { border-top: 0 !important; }
          .t.nb { border-bottom: 0; }
          .num { color: #555; }
          .date { font-size: 11.500px; }
          .blue { color: #6f8fc0; font-size: 12px; }
          .red { color: #b84a48; font-size: 12px; background: #ebe5e4; }
          .yel { background: #fae9c8; color: #222; }
          .big { font-size: 15.500px; }
          .title { background: #ec7a22; color: #fbd7ae; font-size: 15.500px; }
          .pink { background: #f5dfd2; color: #333; font-size: 12px; }
          .blank { background: #e6e6e6; border-right: 2px solid #2a2a2a; border-left: 1px solid #1d1d1d; }
          .amber { background: #fdae03; color: #5c4210; font-size: 12px; }
          .gold { background: #fcd88a; color: #4a4030; font-size: 12px; }
          .cream { background: #fbe8c4; color: #333; font-size: 12px; }
          .edge { background: #d9a55c; border-top: 1px solid #222; border-left: 1px solid #222; border-right: 2px solid #2a2a2a; }
          .err { position: relative; }
          .err::before { content: ""; position: absolute; left: 0; top: 0; border: 3px solid transparent; border-top-color: #2f6b47; border-left-color: #2f6b47; }
          .vs { flex: 1; background: #cdcdcd; position: relative; border-left: 1px solid #dcdcdc; }
          .vs div { position: absolute; left: 3px; width: 10px; background: #f3f3f3; }
          .up { top: 4px; height: 10px; display: flex; align-items: center; justify-content: center; }
          .th { top: 80px; height: 192px; }
          .dn { top: 339px; height: 8px; display: flex; align-items: center; justify-content: center; }
          .pick { position: absolute; left: 384px; top: 178px; width: 92px; height: 24px; border: 2px solid #3f7059; box-sizing: border-box; }
          .pick::after { content: ""; position: absolute; right: -3px; bottom: -3px; width: 4px; height: 4px; background: #2f6b47; }
        </style>
        <div class="g">${html}</div>
        <div class="vs">
          <div class="up"><svg width="6" height="4"><path d="M0 4l3-3 3 3z" fill="#555"/></svg></div>
          <div class="th"></div>
          <div class="dn"><svg width="6" height="4"><path d="M0 0l3 3 3-3z" fill="#555"/></svg></div>
        </div>
        <x-chart></x-chart>
        <div class="pick"></div>
        <x-watermark></x-watermark>`;
    }
  }
  customElements.define('x-sheet', XSheet);

  class XSheetbar extends HTMLElement {
    constructor() {
      super();
      this.attachShadow({ mode: 'open' }).innerHTML = `
        <style>
          :host { display: flex; height: 21px; background: #e4e4e4; align-items: flex-start; flex: none; box-sizing: border-box; border-left: 1px solid #3b7a5b; border-bottom: 1px solid #d8d8d8; }
          .nav { width: 75px; display: flex; gap: 17px; padding: 8px 0 0 21px; box-sizing: border-box; flex: none; }
          .tab { width: 51px; height: 19px; background: #f4f4f4; color: #3d8a63; font-size: 10px; display: flex; align-items: center; justify-content: center; border-bottom: 2px solid #3f7a5c; box-sizing: border-box; flex: none; }
          .add { margin: 3px 0 0 24px; flex: none; }
          .dots { margin: 4px 0 0 412px; flex: none; }
          .sb { display: flex; margin: 5px 0 0 10px; height: 11px; flex: none; width: 355px; }
          .btn { width: 10px; height: 11px; background: #f3f3f3; display: flex; align-items: center; justify-content: center; flex: none; }
          .th { width: 309px; background: #f3f3f3; }
          .tr { flex: 1; background: #cdcdcd; }
        </style>
        <div class="nav">
          <svg width="4" height="6"><path d="M4 0 0 3l4 3z" fill="#c4c4c4"/></svg>
          <svg width="4" height="6"><path d="M0 0l4 3-4 3z" fill="#c4c4c4"/></svg>
        </div>
        <div class="tab">Sheet1</div>
        <svg class="add" width="13" height="13"><circle cx="6.500" cy="6.500" r="5.800" fill="#eee" stroke="#888"/><path d="M3.500 6.500h6 M6.500 3.500v6" stroke="#666" stroke-width="1.200"/></svg>
        <svg class="dots" width="2" height="10"><path d="M1 0v2 M1 4v2 M1 8v2" stroke="#aaa"/></svg>
        <div class="sb">
          <div class="btn"><svg width="4" height="6"><path d="M4 0 0 3l4 3z" fill="#666"/></svg></div>
          <div class="th"></div>
          <div class="tr"></div>
          <div class="btn"><svg width="4" height="6"><path d="M0 0l4 3-4 3z" fill="#555"/></svg></div>
        </div>`;
    }
  }
  customElements.define('x-sheetbar', XSheetbar);

  class XStatus extends HTMLElement {
    constructor() {
      super();
      this.attachShadow({ mode: 'open' }).innerHTML = `
        <style>
          :host { display: flex; flex: 1; align-items: center; background: #f2f2f2; color: #555; font-size: 9px; box-sizing: border-box; padding-left: 7px; border-left: 1px solid #3b7a5b; }
          .r { margin-left: auto; display: flex; align-items: center; height: 100%; }
          .v { width: 28px; height: 100%; display: flex; align-items: center; justify-content: center; flex: none; }
          .on { background: #cbcbcb; }
          .slider { width: 72px; height: 1px; background: #aaa; position: relative; margin: 0 4px; }
          .slider i { position: absolute; left: 37px; top: -4px; width: 3px; height: 9px; background: #666; }
          .z { font-size: 10.500px; margin: 0 14px 0 9px; font-family: "Liberation Sans", sans-serif; }
        </style>
        <span>就绪</span>
        <x-ico n="macro" w="11" h="12" style="margin-left:15px"></x-ico>
        <div class="r">
          <div class="v on"><x-ico n="grid" w="12" h="11"></x-ico></div>
          <div class="v"><x-ico n="page" w="12" h="11"></x-ico></div>
          <div class="v"><x-ico n="brk" w="12" h="11"></x-ico></div>
          <span style="margin-left:3px;font:bold 10px 'Liberation Sans'">-</span>
          <div class="slider"><i></i></div>
          <span style="font:bold 10px 'Liberation Sans'">+</span>
          <span class="z">100%</span>
        </div>`;
    }
  }
  customElements.define('x-status', XStatus);
</script>
</body>
</html>
